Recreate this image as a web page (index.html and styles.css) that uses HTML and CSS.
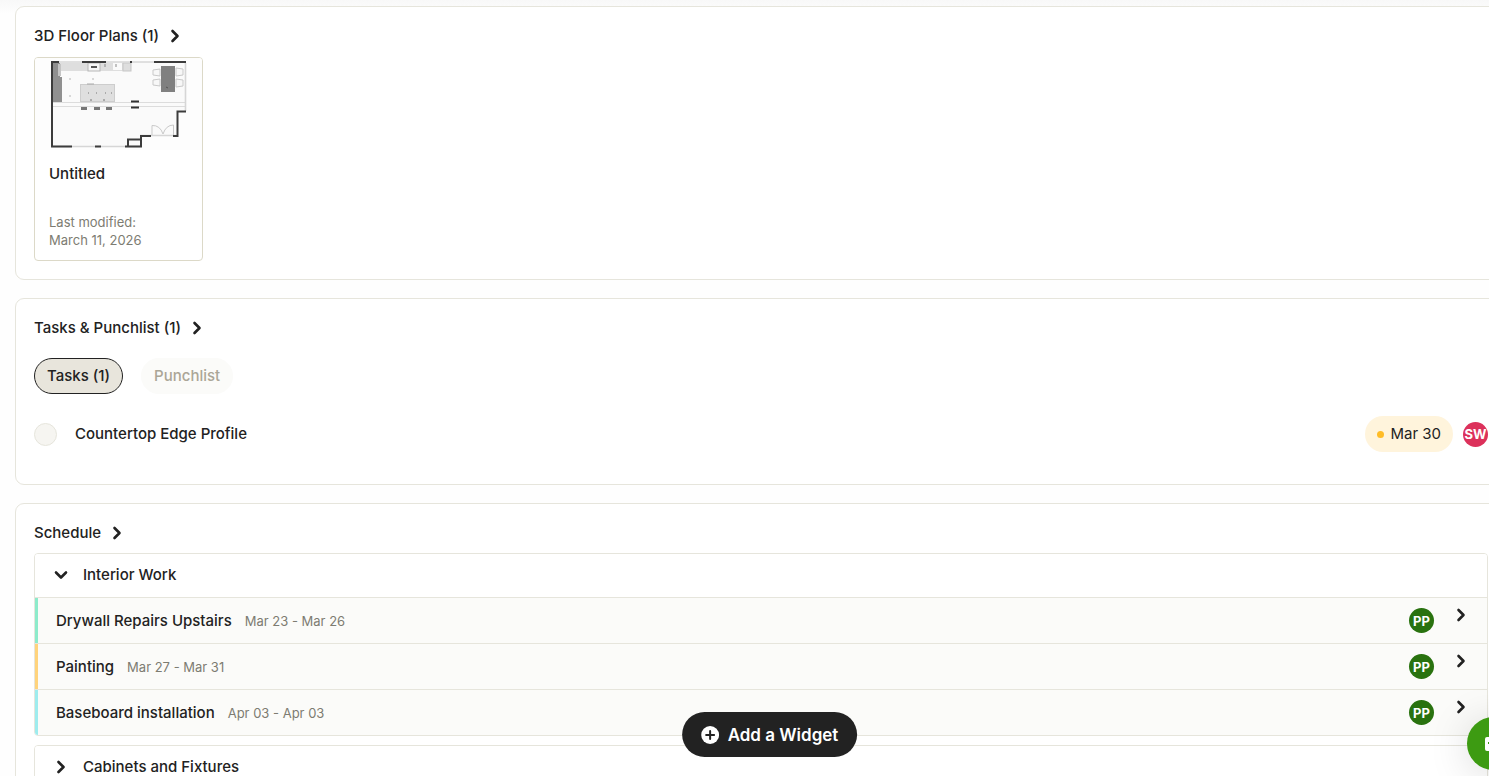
FILE: index.html
```html
<!DOCTYPE html>
<html lang="en">
<head>
    <meta charset="UTF-8">
    <meta name="viewport" content="width=device-width, initial-scale=1.0">
    <title>Project Overview</title>
    <link rel="stylesheet" href="styles.css">
</head>
<body>
    <svg class="icon-defs" width="0" height="0" aria-hidden="true">
        <symbol id="chevron" viewBox="0 0 14 14">
            <path d="M4.500 2L9.500 7L4.500 12" fill="none" stroke="currentColor" stroke-width="2.600" stroke-linecap="round" stroke-linejoin="round"/>
        </symbol>
    </svg>

    <main class="dashboard">
        <!-- Floor plans -->
        <section class="widget">
            <a href="#" class="widget-header">
                <h2>3D Floor Plans (1)</h2>
                <svg class="chevron"><use href="#chevron"/></svg>
            </a>
            <div class="plan-list">
                <a href="#" class="plan-card">
                    <svg class="plan-image" viewBox="0 0 167 92" role="img" aria-label="Floor plan">
                        <rect width="167" height="92" fill="#fdfdfd"/>
                        <path d="M17 4H151V53H143V77H106V89H17Z" fill="#fafafa"/>
                        <!-- counters -->
                        <rect x="24" y="5" width="72" height="8" fill="#dedede"/>
                        <rect x="18" y="5" width="7" height="15" fill="#8f8f8f"/>
                        <rect x="23" y="6" width="3" height="12" fill="#c4c4c4"/>
                        <rect x="18" y="19" width="9" height="25" fill="#909090"/>
                        <rect x="53" y="5" width="12" height="8" fill="#f6f6f6" stroke="#b5b5b5"/>
                        <rect x="56" y="8" width="6" height="2" fill="#555"/>
                        <rect x="78" y="5" width="9" height="7" fill="#fafafa"/>
                        <path d="M70 6v3M81 6v3" stroke="#888"/>
                        <rect x="88" y="5" width="8" height="8" fill="none" stroke="#c6c6c6"/>
                        <path d="M34 21h2M35 20v2M57 21h2M58 20v2M34 38h2M35 37v2" stroke="#ccc"/>
                        <!-- island and stools -->
                        <rect x="45.500" y="26.500" width="34" height="17" fill="#dfdfdf" stroke="#cdcdcd"/>
                        <path d="M53 35h1M61 35h1M70 35h1M76 35h1M55 42h2M68 42h2" stroke="#777"/>
                        <path d="M52 26h7" stroke="#aaa"/>
                        <path d="M46 50h6M59 50h6M71 50h6" stroke="#777" stroke-width="4"/>
                        <!-- beam -->
                        <path d="M18 44.500H151M18 48.500H151" stroke="#dcdcdc"/>
                        <path d="M96 43.500h8M96 49.500h8" stroke="#303030" stroke-width="2"/>
                        <!-- dining table -->
                        <g fill="#f7f7f7" stroke="#c9c9c9">
                            <path d="M125 11l-7 1v5l7 1zM125 21l-7 1v5l7 1zM141 10l7 1v6l-7 1zM141 21l7 1v6l-7 1z"/>
                        </g>
                        <rect x="126" y="8" width="14" height="26" fill="#808080"/>
                        <path d="M131 29l2 1" stroke="#555"/>
                        <!-- walls -->
                        <path d="M16 4H150M150.500 5V53M17 88.500H106M105 77.500H141" fill="none" stroke="#d6d6d6" stroke-width="1.600"/>
                        <g fill="none" stroke="#3c3c3c" stroke-width="2">
                            <path d="M37 88.500H17V4H24M47 4H71M95 4H97M119 4H151M60 88.500H66M90 88.500H106V78H116M93 88V81.500H106M138 78H142.500V53.500H151"/>
                        </g>
                        <path d="M117 77V67.500Q125 67 128 76Q131 67 138.500 67V77" fill="none" stroke="#c9c9c9"/>
                    </svg>
                    <div class="plan-info">
                        <h3>Untitled</h3>
                        <p>Last modified:<br>March 11, 2026</p>
                    </div>
                </a>
            </div>
        </section>

        <!-- Tasks -->
        <section class="widget">
            <a href="#" class="widget-header">
                <h2>Tasks &amp; Punchlist (1)</h2>
                <svg class="chevron"><use href="#chevron"/></svg>
            </a>
            <div class="tabs">
                <button type="button" class="tab active">Tasks (1)</button>
                <button type="button" class="tab">Punchlist</button>
            </div>
            <div class="task-row">
                <input type="checkbox" id="task-1" class="task-check">
                <label for="task-1">Countertop Edge Profile</label>
                <span class="due-date">Mar 30</span>
                <span class="avatar avatar-red">SW</span>
            </div>
        </section>

        <!-- Schedule -->
        <section class="widget">
            <a href="#" class="widget-header">
                <h2>Schedule</h2>
                <svg class="chevron"><use href="#chevron"/></svg>
            </a>
            <div class="schedule-group">
                <button type="button" class="group-header">
                    <svg class="chevron chevron-down"><use href="#chevron"/></svg>
                    Interior Work
                </button>
                <a href="#" class="schedule-item green">
                    <span class="item-name">Drywall Repairs Upstairs</span>
                    <span class="item-dates">Mar 23 - Mar 26</span>
                    <span class="avatar avatar-green">PP</span>
                    <svg class="chevron"><use href="#chevron"/></svg>
                </a>
                <a href="#" class="schedule-item orange">
                    <span class="item-name">Painting</span>
                    <span class="item-dates">Mar 27 - Mar 31</span>
                    <span class="avatar avatar-green">PP</span>
                    <svg class="chevron"><use href="#chevron"/></svg>
                </a>
                <a href="#" class="schedule-item blue">
                    <span class="item-name">Baseboard installation</span>
                    <span class="item-dates">Apr 03 - Apr 03</span>
                    <span class="avatar avatar-green">PP</span>
                    <svg class="chevron"><use href="#chevron"/></svg>
                </a>
            </div>
            <div class="schedule-group">
                <button type="button" class="group-header">
                    <svg class="chevron"><use href="#chevron"/></svg>
                    Cabinets and Fixtures
                </button>
            </div>
        </section>
    </main>

    <button type="button" class="add-widget">
        <svg width="18" height="18" viewBox="0 0 18 18" aria-hidden="true">
            <circle cx="9" cy="9" r="9" fill="#fff"/>
            <path d="M9 5v8M5 9h8" stroke="#222" stroke-width="2" stroke-linecap="round"/>
        </svg>
        Add a Widget
    </button>

    <button type="button" class="chat-button" aria-label="Open chat">
        <svg width="18" height="18" viewBox="0 0 18 18" aria-hidden="true">
            <path d="M2 2h14a2 2 0 0 1 2 2v10a2 2 0 0 1-2 2H2a2 2 0 0 1-2-2V4a2 2 0 0 1 2-2z" fill="#fff"/>
            <path d="M3 8h12" stroke="#3d9b12" stroke-width="2"/>
        </svg>
    </button>
</body>
</html>
```
FILE: styles.css
```css
* {
    box-sizing: border-box;
}
html {
    height: 100%;
    overflow: hidden;
}
body {
    margin: 0;
    height: 100%;
    overflow: hidden;
    background: linear-gradient(#f8f8f8, #fefefe 14px);
    color: #222;
    font-family: Inter, Roboto, sans-serif;
    font-size: 15px;
    font-weight: 500;
    line-height: 22px;
}
h2, h3, p {
    margin: 0;
    font-size: 15px;
    font-weight: 500;
}
a {
    color: inherit;
    text-decoration: none;
}
button {
    font: inherit;
    color: inherit;
    cursor: pointer;
}
.icon-defs {
    position: absolute;
}

/* The board is wider than the window and runs off its right edge */
.dashboard {
    display: flex;
    flex-direction: column;
    gap: 18px;
    margin: 6px -18px 0 15px;
}
.widget {
    padding: 18px;
    border: 1px solid #e6e5dc;
    border-radius: 9px;
    background: #fff;
}
.widget-header {
    display: flex;
    align-items: center;
    gap: 9px;
    margin-bottom: 9px;
}
.chevron {
    width: 14px;
    height: 14px;
    flex: none;
}
.chevron-down {
    transform: rotate(90deg);
}

/* Floor plans */
.plan-list {
    display: flex;
    margin-top: 10px;
}
.plan-card {
    width: 169px;
    border: 1px solid #dcd9c8;
    border-radius: 4px;
    overflow: hidden;
}
.plan-image {
    display: block;
    width: 100%;
}
.plan-info {
    padding: 13px 14px 11px;
}
.plan-info p {
    margin-top: 28px;
    color: #7d7c72;
    font-size: 13px;
    font-weight: 400;
    line-height: 18px;
}

/* Tasks */
.tabs {
    display: flex;
    gap: 18px;
    margin-top: 19px;
}
.tab {
    height: 36px;
    padding: 0 12px;
    border: 1px solid #fbfbf9;
    border-radius: 18px;
    background: #fbfbf9;
    color: #aba697;
}
.tab.active {
    border-color: #222;
    background: #e8e5dc;
    color: #222;
}
.task-row {
    display: flex;
    align-items: center;
    margin: 22px 0 14px;
}
.task-check {
    appearance: none;
    width: 23px;
    height: 23px;
    margin: 0 18px 0 0;
    border: 1px solid #e6e5dc;
    border-radius: 50%;
    background: #f6f5f1;
}
.due-date {
    display: flex;
    align-items: center;
    gap: 6px;
    height: 36px;
    margin-left: auto;
    margin-right: 10px;
    padding: 0 12px;
    border-radius: 18px;
    background: #fff4dc;
    font-weight: 400;
}
.due-date::before {
    content: "";
    width: 7px;
    height: 7px;
    border-radius: 50%;
    background: #ffbc26;
}
.avatar {
    display: flex;
    align-items: center;
    justify-content: center;
    width: 25px;
    height: 25px;
    border-radius: 50%;
    color: #fff;
    font-size: 13px;
    font-weight: 700;
}
.avatar-red {
    background: #dc315b;
}
.avatar-green {
    background: #29720f;
}

/* Schedule */
.schedule-group {
    margin-bottom: 9px;
    border: 1px solid #e6e5dc;
    border-radius: 4px;
    overflow: hidden;
}
.group-header {
    display: flex;
    align-items: center;
    gap: 15px;
    width: 100%;
    height: 43px;
    padding: 0 20px 2px 19px;
    border: 0;
    background: #fff;
}
.schedule-item {
    display: flex;
    align-items: center;
    height: 46px;
    padding-right: 19px;
    border-top: 1px solid #e6e5dc;
    background: #fbfbf9;
}
.schedule-item::before {
    content: "";
    align-self: stretch;
    width: 3px;
    margin-right: 18px;
}
.schedule-item.green::before {
    background: #8debcb;
}
.schedule-item.orange::before {
    background: #ffd37c;
}
.schedule-item.blue::before {
    background: #9eecee;
}
.item-dates {
    margin-left: 13px;
    color: #7d7c72;
    font-size: 13px;
    font-weight: 400;
}
.schedule-item .avatar {
    margin-left: auto;
    margin-right: 20px;
}
.schedule-item .chevron {
    margin-bottom: 12px;
}

/* Floating buttons */
.add-widget {
    position: fixed;
    left: calc(50% + 25px);
    bottom: 19px;
    display: flex;
    align-items: center;
    gap: 9px;
    height: 45px;
    padding: 0 19px;
    border: 0;
    border-radius: 23px;
    background: #222;
    color: #fff;
    font-size: 17px;
    font-weight: 600;
    white-space: nowrap;
    transform: translateX(-50%);
}
.chat-button {
    position: fixed;
    right: -31px;
    bottom: 6px;
    display: flex;
    align-items: center;
    justify-content: center;
    width: 53px;
    height: 53px;
    padding: 0;
    border: 0;
    border-radius: 50%;
    background: #3d9b12;
    box-shadow: 0 4px 40px rgba(0, 0, 0, 0.15);
}
```
